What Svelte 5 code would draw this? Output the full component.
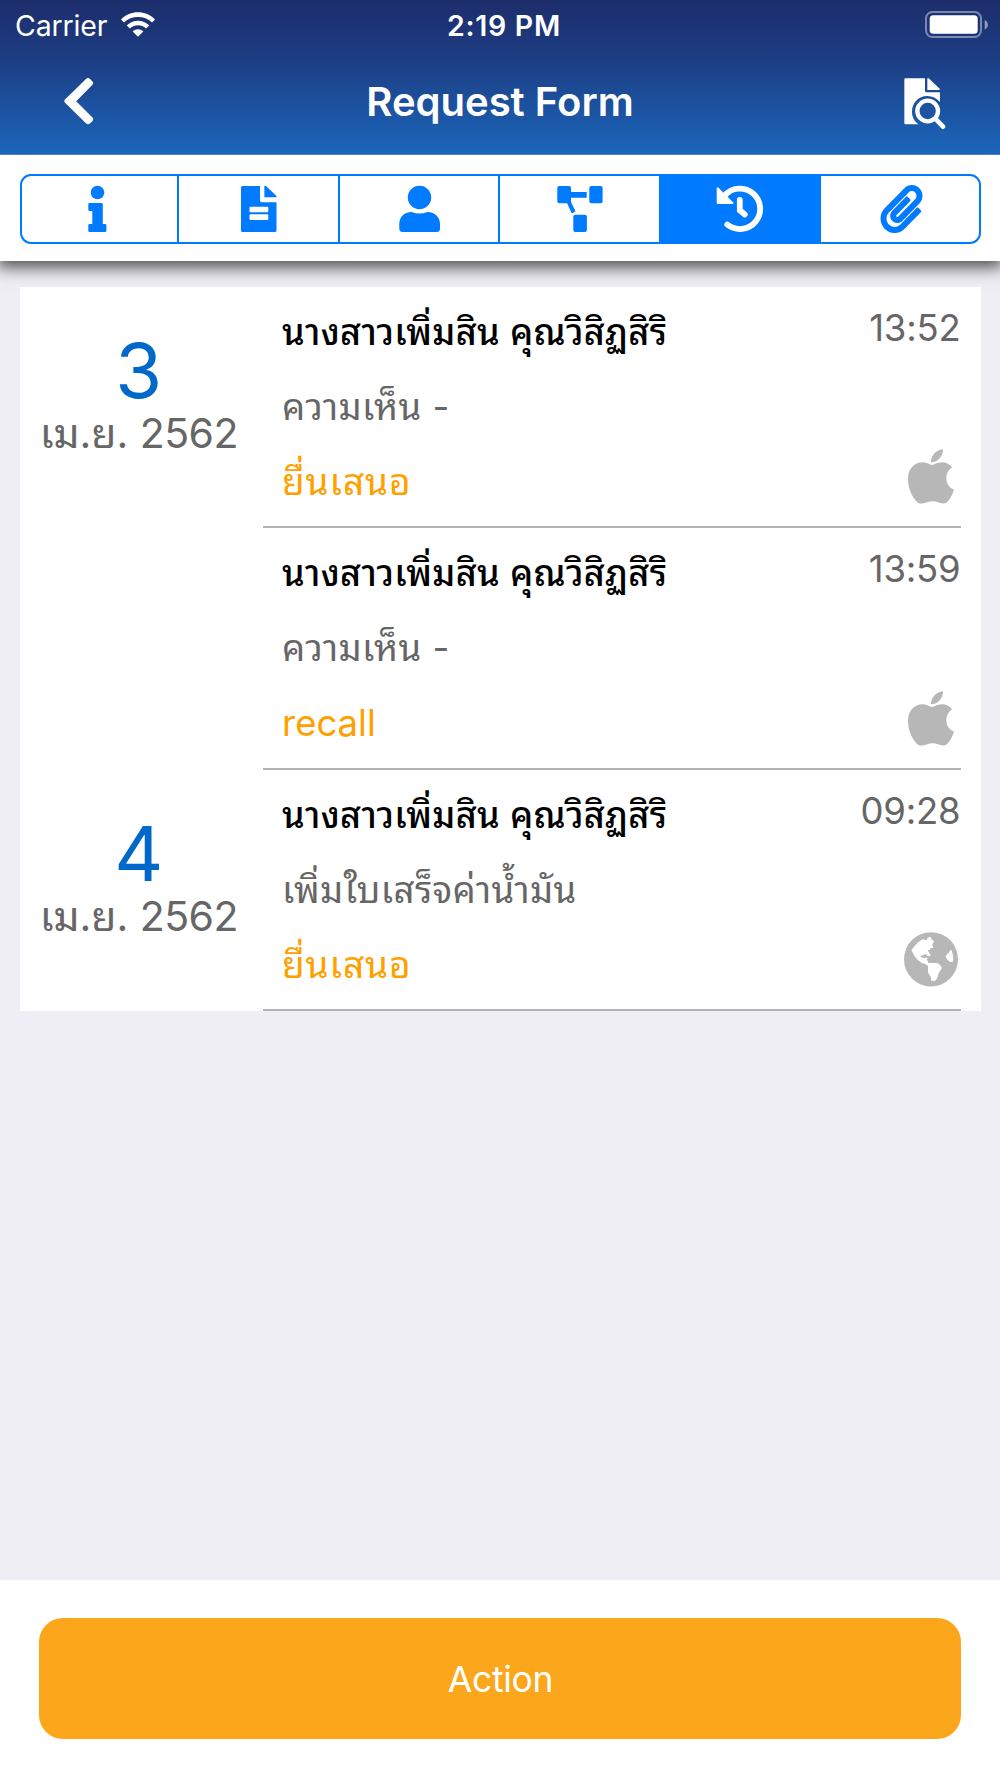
<script>
    const tabs = ["info", "document", "person", "diagram", "history", "attachment"];
    let activeTab = $state("history");

    const name = "นางสาวเพิ่มสิน คุณวิสิฏสิริ";
    const history = [
        {
            day: "3",
            month: "เม.ย.",
            year: "2562",
            name,
            comment: "ความเห็น -",
            status: "ยื่นเสนอ",
            time: "13:52",
            device: "apple",
        },
        {
            name,
            comment: "ความเห็น -",
            status: "recall",
            time: "13:59",
            device: "apple",
        },
        {
            day: "4",
            month: "เม.ย.",
            year: "2562",
            name,
            comment: "เพิ่มใบเสร็จค่าน้ำมัน",
            status: "ยื่นเสนอ",
            time: "09:28",
            device: "web",
        },
    ];
</script>

<svelte:head>
    <title>Request Form</title>
</svelte:head>

<div class="screen">
    <header>
        <div class="status-bar">
            <div class="carrier">
                <span>Carrier</span>
                <svg class="wifi" viewBox="0 0 102 74">
                    <path d="M0 22C28-7 74-7 102 22L93 31C70 9 32 9 9 31Z" />
                    <path d="M17 40C36 21 66 21 85 40L75 49C61 36 41 36 27 49Z" />
                    <path d="M35 58C44 49 58 49 67 58L51 74Z" />
                </svg>
            </div>
            <span class="clock">2:19 PM</span>
            <svg class="battery" viewBox="0 0 64 28">
                <rect x="1" y="1" width="55" height="25" rx="6.5" fill="none" stroke="#fff" stroke-opacity=".42" stroke-width="2" />
                <rect x="4.7" y="4.3" width="48" height="18.5" rx="3.5" />
                <path d="M59.7 9C64 10.5 64 17 59.7 18.5Z" opacity=".5" />
            </svg>
        </div>
        <nav>
            <button class="icon-btn" aria-label="Back">
                <svg width="30" height="47" viewBox="0 0 30 47">
                    <path d="M22.2.8Q24-.6 25.8.8L28.5 3.5Q30 5 28.5 6.8L12.2 23.2L28.5 39.6Q30 41.4 28.5 43L25.8 45.6Q24 47 22.2 45.6L1 24.8Q-.4 23.2 1 21.6Z" />
                </svg>
            </button>
            <h1>Request Form</h1>
            <button class="icon-btn preview" aria-label="Preview">
                <svg width="42" height="52" viewBox="0 0 126 156">
                    <path d="M4 1H63V38Q63 43 68 43H108V72Q92 54 70 54C42 54 24 76 24 101C24 118 32 131 44 139H4Q1 139 1 135V5Q1 1 4 1Z" />
                    <path d="M70 1H74L107 32V36H70Z" />
                    <circle cx="71" cy="99" r="31" fill="none" stroke="#fff" stroke-width="13" />
                    <path d="M94 122L117 146" stroke="#fff" stroke-width="14" stroke-linecap="round" />
                </svg>
            </button>
        </nav>
    </header>

    <div class="tab-bar">
        <div class="tabs">
            {#each tabs as tab}
                <button
                    class="tab"
                    class:active={tab == activeTab}
                    aria-label={tab}
                    onclick={() => (activeTab = tab)}
                >
                    <svg width="48" height="48" viewBox="0 0 48 48">
                        {#if tab == "info"}
                            <circle cx="22.5" cy="7.5" r="6.8" />
                            <path d="M14.5 18H26.5Q27.8 18 27.8 19.3V39H30Q31.4 39 31.4 40.3V45.7Q31.4 47 30 47H14.5Q13.3 47 13.3 45.7V40.3Q13.3 39 14.5 39H17.3V26H14.5Q13.3 26 13.3 24.7V19.3Q13.3 18 14.5 18Z" />
                        {:else if tab == "document"}
                            <path fill-rule="evenodd" d="M8.5 1H26V15.5Q26 17.3 28 17.3H42.5V45.5Q42.5 47 41 47H8.5Q7 47 7 45.5V2.5Q7 1 8.5 1ZM16.5 21.7Q15.5 21.7 15.5 22.7V26.3Q15.5 27.3 16.5 27.3H33.3Q34.3 27.3 34.3 26.3V22.7Q34.3 21.7 33.3 21.7ZM16.5 29.3Q15.5 29.3 15.5 30.3V34Q15.5 35 16.5 35H33.3Q34.3 35 34.3 34V30.3Q34.3 29.3 33.3 29.3Z" />
                            <path d="M30.4 1H32L42.5 11V12.3H30.4Z" />
                        {:else if tab == "person"}
                            <circle cx="24.5" cy="12.5" r="11.7" />
                            <path d="M16.5 27Q24.5 30 32.5 27C40 27 45 32 45 39V43.5Q45 47 41.5 47H7.8Q4.3 47 4.3 43.5V39C4.3 32 9 27 16.5 27Z" />
                        {:else if tab == "diagram"}
                            <rect x="1.3" y="1" width="13.7" height="17.2" rx="2" />
                            <rect x="33.3" y="1" width="13.3" height="17.2" rx="2" />
                            <rect x="17.3" y="29.8" width="13.6" height="17.2" rx="2" />
                            <path d="M14 7H30.7V12.7H14ZM10.6 17H15L19.5 26.3L15.8 28.5Z" />
                        {:else if tab == "history"}
                            <path d="M8.5 10.8A20.2 20.2 0 1 1 11.3 39.6" fill="none" stroke="currentColor" stroke-width="5.8" stroke-linecap="round" />
                            <path d="M.7 3Q1.2 1.8 2.5 2.8L17 17.2Q18 19 16.5 19H2Q.7 19 .7 17.7Z" />
                            <path d="M23.8 14.8V25.3L28.8 29.5" fill="none" stroke="currentColor" stroke-width="5.8" stroke-linecap="round" />
                        {:else}
                            <path transform="translate(4.5 0) scale(.09375)" d="M43.246 466.142c-58.43-60.289-57.341-157.511 1.386-217.581L254.392 34c44.316-45.332 116.351-45.336 160.671 0 43.89 44.894 43.943 117.329 0 162.276L232.214 383.128c-29.855 30.537-78.633 30.111-107.982-.998-28.275-29.97-27.368-77.473 1.452-106.953l143.743-146.835c6.182-6.314 16.312-6.422 22.626-.241l22.861 22.379c6.315 6.182 6.422 16.312.241 22.626L171.427 319.927c-4.932 5.045-5.236 13.428-.648 18.292 4.372 4.634 11.245 4.711 15.688.165l182.849-186.851c19.613-20.062 19.613-52.725-.011-72.798-19.189-19.627-49.957-19.637-69.154 0L90.39 293.295c-34.763 35.56-35.299 93.12-1.191 128.313 34.01 35.093 88.985 35.137 123.058.286l172.06-175.999c6.182-6.319 16.312-6.422 22.626-.241l22.861 22.379c6.315 6.182 6.422 16.312.241 22.626l-172.06 175.999c-59.576 60.938-155.943 60.216-214.787-.485z" />
                        {/if}
                    </svg>
                </button>
            {/each}
        </div>
    </div>

    <main>
        <div class="list">
            {#each history as item}
                <div class="row">
                    <div class="date">
                        {#if item.day}
                            <p class="day">{item.day}</p>
                            <p class="month">{item.month} <span>{item.year}</span></p>
                        {/if}
                    </div>
                    <div class="detail">
                        <div class="texts">
                            <p class="name">{item.name}</p>
                            <p class="comment">{item.comment}</p>
                            <p class="status" class:latin={item.status == "recall"}>{item.status}</p>
                        </div>
                        <div class="side">
                            <span class="time">{item.time}</span>
                            <svg width="54" height="55" viewBox="0 0 162 165">
                                {#if item.device == "apple"}
                                    <path d="M117 1C118 20 102 41 81 40C80 22 95 3 117 1Z" />
                                    <path d="M84 48C93 46 102 40 117 40C129 41 139 47 144 56C133 62 127 74 127 88C127 105 137 117 150 122C144 140 135 155 126 162C112 167 100 157 85 157C70 157 57 168 43 162C25 147 12 119 12 89C12 59 32 40 55 40C67 40 74 46 84 48Z" />
                                {:else}
                                    <path fill-rule="evenodd" d="M81 .5A81 81.5 0 1 1 81 163.5A81 81.5 0 1 1 81 .5ZM22 55L30 44L42 31L56 22L64 24Q70 26 71 18Q76 13 82 17L83 23Q88 23 90 29L85 36Q87 39 85 42L88 45Q86 50 78 48L79 53L71 54L76 63L80 70Q76 74 70 71Q65 64 58 69Q50 70 50 75L63 79L68 76Q72 79 69 84Q73 87 72 92L84 93H100Q109 96 114 108Q109 116 104 123Q101 137 96 145Q89 149 82 146Q82 134 77 129Q71 123 72 116V102Q65 95 52 92Q41 85 33 74ZM140 54Q133 65 125 72Q129 86 139 90L147 89Q149 68 142 54Z" />
                                {/if}
                            </svg>
                        </div>
                    </div>
                </div>
            {/each}
        </div>
    </main>

    <footer>
        <button class="action">Action</button>
    </footer>
</div>

<style>
    :global(body) {
        margin: 0;
        background: #efeef4;
    }
    .screen {
        width: 1000px;
        height: 1778px;
        display: flex;
        flex-direction: column;
        overflow: hidden;
        background: #efeef4;
        font-family: Inter, "Noto Sans Thai Looped", "Noto Sans Thai", "Noto Sans", sans-serif;
    }
    p,
    h1 {
        margin: 0;
        white-space: nowrap;
    }
    button {
        margin: 0;
        padding: 0;
        border: none;
        background: none;
        font-family: inherit;
    }
    svg {
        display: block;
        fill: currentColor;
    }
    header {
        flex: none;
        height: 155px;
        box-sizing: border-box;
        color: white;
        background: linear-gradient(#1c2d6b, #1d3c82 36%, #1b66ba);
        border-bottom: 1px solid #4488cc;
        position: relative;
        z-index: 2;
    }
    .status-bar {
        display: grid;
        grid-template-columns: 1fr auto 1fr;
        align-items: center;
        height: 50px;
        padding: 0 11px 0 15px;
        font-size: 28.5px;
    }
    .carrier {
        display: flex;
        align-items: center;
        gap: 14px;
        letter-spacing: -0.15px;
    }
    .wifi {
        width: 34px;
        height: 25px;
        margin-bottom: 2px;
    }
    .clock {
        margin-left: 4px;
        font-weight: 600;
        letter-spacing: 0.7px;
    }
    .battery {
        width: 64px;
        height: 28px;
        justify-self: end;
    }
    nav {
        display: grid;
        grid-template-columns: 42px 1fr 42px;
        align-items: center;
        height: 102px;
        padding: 0 54px 0 64px;
    }
    .icon-btn {
        color: white;
    }
    .preview {
        margin-top: 5px;
    }
    h1 {
        margin-right: 10px;
        font-size: 40px;
        font-weight: 600;
        text-align: center;
    }
    .tab-bar {
        flex: none;
        height: 106px;
        box-sizing: border-box;
        padding: 19px 19.5px 0;
        background: white;
        box-shadow: 0 3px 16px 3px rgba(0, 0, 0, 0.7);
        z-index: 1;
    }
    .tabs {
        display: grid;
        grid-template-columns: 157px 161.5px 160px 161px 160px 1fr;
        height: 70px;
        box-sizing: border-box;
        border: 2px solid #007aff;
        border-radius: 11px;
    }
    .tab {
        display: flex;
        justify-content: center;
        align-items: center;
        border-right: 2px solid #007aff;
        color: #007aff;
    }
    .tab:last-child {
        border-right: none;
    }
    .tab.active {
        background: #007aff;
        color: white;
    }
    main {
        flex: 1;
        padding: 25.5px 19.5px 0;
    }
    .list {
        background: white;
    }
    .row {
        display: grid;
        grid-template-columns: 243.5px 1fr;
        height: 241.5px;
        padding-right: 20px;
    }
    .date {
        display: flex;
        flex-direction: column;
        align-items: center;
        padding: 43px 5px 0 0;
    }
    .day {
        font-size: 76px;
        line-height: 80px;
        color: #0068c8;
    }
    .month {
        font-size: 41px;
        line-height: 46px;
        color: #666;
    }
    .month span {
        letter-spacing: -0.6px;
    }
    .detail {
        display: flex;
        justify-content: space-between;
        box-sizing: border-box;
        padding-left: 19px;
        border-bottom: 2px solid #b3b3b3;
    }
    .texts {
        display: flex;
        flex-direction: column;
        padding-top: 8px;
        font-size: 36px;
        line-height: 75px;
    }
    .name {
        font-weight: 500;
        letter-spacing: 0.28px;
        color: black;
    }
    .comment {
        font-size: 36.5px;
        letter-spacing: 0.4px;
        color: #666;
    }
    .status {
        margin-top: -1px;
        font-size: 37px;
        letter-spacing: 0.9px;
        color: #ffa000;
    }
    .status.latin {
        margin-top: 0;
        font-size: 36.5px;
        letter-spacing: 0;
    }
    .side {
        display: flex;
        flex-direction: column;
        align-items: flex-end;
        justify-content: space-between;
        padding: 19px 0 22px;
        color: #b7b7b7;
    }
    .side svg {
        margin-right: 3px;
    }
    .time {
        font-size: 36.5px;
        line-height: 45px;
        letter-spacing: -0.2px;
        color: #666;
    }
    footer {
        flex: none;
        height: 198px;
        box-sizing: border-box;
        padding: 38px 39px 0;
        background: white;
    }
    .action {
        width: 100%;
        height: 121px;
        padding: 1px 0 0 1px;
        border-radius: 24px;
        background: #fca61b;
        color: white;
        font-size: 35.5px;
        letter-spacing: -0.3px;
    }
</style>
